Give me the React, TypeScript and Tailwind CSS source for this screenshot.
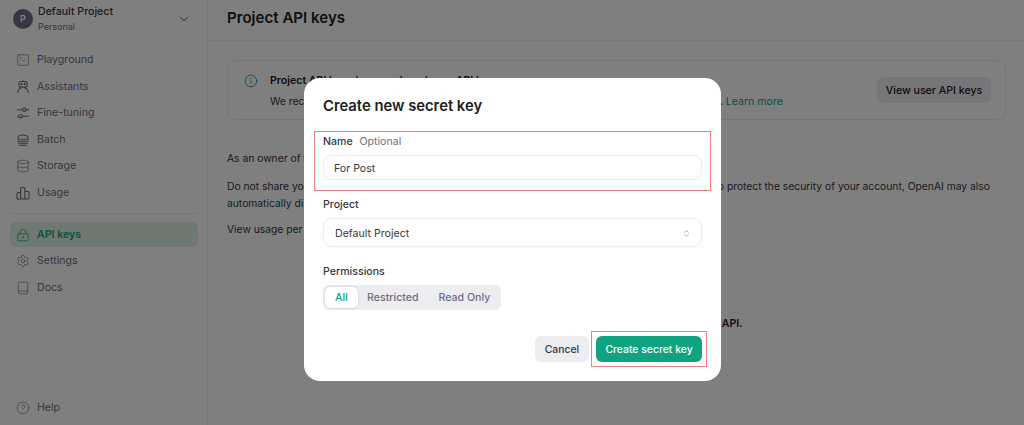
import { ChevronDown, ChevronsUpDown, Info, Database, Settings, CircleHelp, SquareTerminal, LockKeyhole, Book } from 'lucide-react';
import type { ReactNode } from 'react';

const AssistantIcon = () => (
  <svg width="14" height="14" viewBox="0 0 14 14" fill="none" stroke="currentColor" strokeWidth="1.1">
    <rect x="3" y="1.5" width="8" height="5.6" rx="1.4" />
    <circle cx="5.4" cy="4.2" r="0.55" fill="currentColor" />
    <circle cx="8.6" cy="4.2" r="0.55" fill="currentColor" />
    <path d="M7 0.2V1.5M5 7.1v1.2c-2 .3-3.2 1.8-3.2 4.7M9 7.1v1.2c2 .3 3.2 1.8 3.2 4.7" />
  </svg>
);

const TuningIcon = () => (
  <svg width="14" height="14" viewBox="0 0 14 14" fill="none" stroke="currentColor" strokeWidth="1.1">
    <circle cx="8.2" cy="3.8" r="1.7" />
    <circle cx="4.6" cy="10.2" r="1.7" />
    <path d="M1 3.8h5.5M9.9 3.8h3.1M1 10.2h1.9M6.3 10.2H13" />
  </svg>
);

const BatchIcon = () => (
  <svg width="14" height="14" viewBox="0 0 14 14" fill="none" stroke="currentColor" strokeWidth="1.1">
    <path d="M2 6.2V5c0-1.8 2-3 5-3s5 1.2 5 3v1.2z" />
    <path d="M1 8.2h12M2 10.2h10M3 12.2h8" />
  </svg>
);

const UsageIcon = () => (
  <svg width="14" height="14" viewBox="0 0 14 14" fill="none" stroke="currentColor" strokeWidth="1.1">
    <path d="M1 13V7.5a1 1 0 0 1 1-1h2.6V13M4.6 13V2.5a1 1 0 0 1 1-1h2.2a1 1 0 0 1 1 1V13M8.8 5.5H12a1 1 0 0 1 1 1V13M1 13h12" />
  </svg>
);

const NavItem = ({ icon, label, active }: { icon: ReactNode; label: string; active?: boolean }) => (
  <div
    className={
      'flex h-[25px] items-center gap-[7px] rounded-[6px] px-[6px] text-[10.6px] ' +
      (active ? 'bg-[#dff0e2] font-semibold text-[#10a37f]' : 'text-[#6e6e80]')
    }
  >
    <span className="flex w-[14px] justify-center">{icon}</span>
    {label}
  </div>
);

const Sidebar = () => (
  <aside className="flex h-full w-[208px] shrink-0 flex-col border-r border-[#f0f0f2] pl-[10px] pr-[9px]">
    <div className="flex h-[37px] shrink-0 items-center pl-[3px] pr-[7px]">
      <div className="flex h-[20px] w-[20px] shrink-0 items-center justify-center rounded-full bg-[#6e6e80] text-[9px] font-semibold text-white">P</div>
      <div className="ml-[5px] flex-1">
        <div className="text-[10.6px] leading-[14px] font-medium text-[#353740]">Default Project</div>
        <div className="mt-[2px] text-[9px] leading-[12px] text-[#6e6e80]">Personal</div>
      </div>
      <ChevronDown size={14} strokeWidth={1.5} className="text-[#353740]" />
    </div>
    <nav className="mt-[10.5px] flex flex-col gap-[1.5px]">
      <NavItem icon={<SquareTerminal size={14} strokeWidth={1.1} />} label="Playground" />
      <NavItem icon={<AssistantIcon />} label="Assistants" />
      <NavItem icon={<TuningIcon />} label="Fine-tuning" />
      <NavItem icon={<BatchIcon />} label="Batch" />
      <NavItem icon={<Database size={14} strokeWidth={1.1} />} label="Storage" />
      <NavItem icon={<UsageIcon />} label="Usage" />
    </nav>
    <div className="my-[8px] ml-[1px] border-t border-[#ececf1]" />
    <nav className="flex flex-col gap-[1.5px]">
      <NavItem active icon={<LockKeyhole size={14} strokeWidth={1.25} />} label="API keys" />
      <NavItem icon={<Settings size={14} strokeWidth={1.1} />} label="Settings" />
      <NavItem icon={<Book size={14} strokeWidth={1.1} />} label="Docs" />
    </nav>
    <div className="mt-auto mb-[5px]">
      <NavItem icon={<CircleHelp size={14} strokeWidth={1.1} />} label="Help" />
    </div>
  </aside>
);

const Main = () => (
  <main className="min-w-0 flex-1">
    <header className="flex h-[41px] items-center border-b border-[#f0f0f2] pb-[3px] pl-[19px] text-[15.1px] font-semibold text-[#202123]">
      Project API keys
    </header>
    <div className="pl-[19px] pr-[18px] pt-[19px] text-[10.6px] leading-[17px] text-[#353740]">
      <div className="flex h-[60px] items-center rounded-[8px] border border-[#ececf1] pl-[16px] pr-[14px]">
        <Info size={14} strokeWidth={1.4} className="mr-[12px] mb-[18px] shrink-0 text-[#10a37f]" />
        <div className="flex-1 pt-[2px]">
          <div className="font-semibold text-[#202123]">Project API keys have replaced user API keys.</div>
          <div className="mt-[4px]">
            <span className="tracking-[-0.09px]">We recommend using project based API keys for more granular control over your resources. </span>
            <span className="text-[#10a37f]">Learn more</span>
          </div>
        </div>
        <div className="flex h-[26px] w-[114px] items-center justify-center rounded-[6px] bg-[#ececf1] font-medium text-[#202123]">View user API keys</div>
      </div>
      <div className="text-[10.3px]">
        <p className="mt-[30px]">As an owner of this project, you can view and manage all API keys in this project.</p>
        <p className="mt-[11px]">
          Do not share your API key with others, or expose it in the browser or other client-side code. In order to protect the security of your account, OpenAI may also automatically disable any API key that has leaked publicly.
        </p>
        <p className="mt-[9px]">View usage per API key on the Usage page.</p>
      </div>
      <p className="mt-[77px] pl-[290px] font-semibold text-[#202123]">Create an API key to access the OpenAI API.</p>
    </div>
  </main>
);

const Field = ({ label, children }: { label: ReactNode; children: ReactNode }) => (
  <div>
    <div className="mb-[6px] text-[10.6px] leading-[14px] font-medium text-[#353740]">{label}</div>
    {children}
  </div>
);

const Modal = () => (
  <div className="fixed inset-0 flex justify-center bg-black/50 pl-[1px] pt-[78px]">
    <div className="h-[303px] w-[417px] rounded-[16px] bg-white px-[19px] pt-[18px]">
      <h2 className="text-[14.8px] leading-[20px] font-semibold text-[#202123]">Create new secret key</h2>
      <div className="-mx-[9px] mt-[15px] h-[60px] border border-[#ef7f7f] px-[8px] pt-[3px]">
        <Field label={<>Name <span className="ml-[4px] font-normal text-[#6e6e80]">Optional</span></>}>
          <div className="flex h-[25px] items-center rounded-[8px] border border-[#ececf1] px-[10px] pt-[2px] text-[10.6px] text-[#353740]">For Post</div>
        </Field>
      </div>
      <div className="mt-[7px]">
        <Field label="Project">
          <div className="flex h-[29px] items-center justify-between rounded-[8px] border border-[#ececf1] pl-[11px] pr-[10px] pt-[2px] text-[10.6px] text-[#353740]">
            Default Project
            <ChevronsUpDown size={9} className="text-[#8e8ea0]" />
          </div>
        </Field>
      </div>
      <div className="mt-[18px]">
        <Field label="Permissions">
          <div className="mt-[1px] flex h-[25px] w-[178px] items-center rounded-[6px] bg-[#ececf1] p-[2px] text-[10.6px] font-medium text-[#6e6e80]">
            <div className="flex h-[21px] w-[33px] items-center justify-center rounded-[5px] bg-white pt-[1px] text-[#10a37f] shadow-[0_0_2px_rgba(0,0,0,0.2)]">All</div>
            <div className="ml-[9px] pt-[1px]">Restricted</div>
            <div className="ml-[20px] pt-[1px]">Read Only</div>
          </div>
        </Field>
      </div>
      <div className="mt-[26px] flex justify-end gap-[7px] text-[10.4px] font-medium">
        <div className="flex h-[26px] w-[54px] items-center justify-center rounded-[6px] bg-[#ececf1] pt-[2px] text-[#353740]">Cancel</div>
        <div className="relative flex h-[26px] w-[106px] items-center justify-center rounded-[6px] bg-[#10a37f] pt-[2px] text-white">
          Create secret key
          <div className="absolute -inset-[5px] border border-[#ef7f7f]" />
        </div>
      </div>
    </div>
  </div>
);

export default function App() {
  return (
    <div className="relative flex h-[425px] w-[1024px] overflow-hidden bg-white font-['Inter',sans-serif]">
      <Sidebar />
      <Main />
      <Modal />
    </div>
  );
}
